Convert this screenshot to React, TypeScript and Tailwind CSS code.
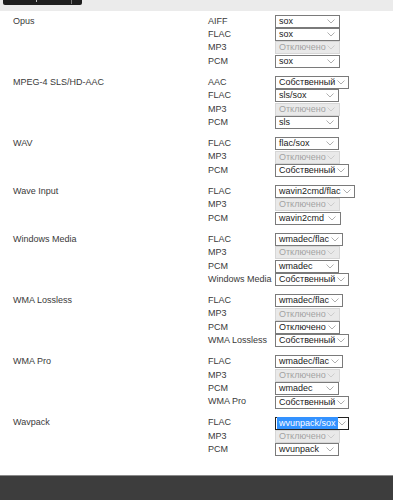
const groups = [
  {
    name: 'Opus',
    rows: [
      { label: 'AIFF', value: 'sox', w: 'w-[65px]' },
      { label: 'FLAC', value: 'sox', w: 'w-[65px]' },
      { label: 'MP3', value: 'Отключено', w: 'w-[65px]', disabled: true },
      { label: 'PCM', value: 'sox', w: 'w-[65px]' },
    ],
  },
  {
    name: 'MPEG-4 SLS/HD-AAC',
    rows: [
      { label: 'AAC', value: 'Собственный', w: 'w-[74px]' },
      { label: 'FLAC', value: 'sls/sox', w: 'w-[64px]' },
      { label: 'MP3', value: 'Отключено', w: 'w-[65px]', disabled: true },
      { label: 'PCM', value: 'sls', w: 'w-[64px]' },
    ],
  },
  {
    name: 'WAV',
    rows: [
      { label: 'FLAC', value: 'flac/sox', w: 'w-[64px]' },
      { label: 'MP3', value: 'Отключено', w: 'w-[65px]', disabled: true },
      { label: 'PCM', value: 'Собственный', w: 'w-[74px]' },
    ],
  },
  {
    name: 'Wave Input',
    rows: [
      { label: 'FLAC', value: 'wavin2cmd/flac', w: 'w-[80px]' },
      { label: 'MP3', value: 'Отключено', w: 'w-[65px]', disabled: true },
      { label: 'PCM', value: 'wavin2cmd', w: 'w-[66px]' },
    ],
  },
  {
    name: 'Windows Media',
    rows: [
      { label: 'FLAC', value: 'wmadec/flac', w: 'w-[68px]' },
      { label: 'MP3', value: 'Отключено', w: 'w-[65px]', disabled: true },
      { label: 'PCM', value: 'wmadec', w: 'w-[64px]' },
      { label: 'Windows Media', value: 'Собственный', w: 'w-[74px]' },
    ],
  },
  {
    name: 'WMA Lossless',
    rows: [
      { label: 'FLAC', value: 'wmadec/flac', w: 'w-[68px]' },
      { label: 'MP3', value: 'Отключено', w: 'w-[65px]', disabled: true },
      { label: 'PCM', value: 'Отключено', w: 'w-[65px]' },
      { label: 'WMA Lossless', value: 'Собственный', w: 'w-[74px]' },
    ],
  },
  {
    name: 'WMA Pro',
    rows: [
      { label: 'FLAC', value: 'wmadec/flac', w: 'w-[68px]' },
      { label: 'MP3', value: 'Отключено', w: 'w-[65px]', disabled: true },
      { label: 'PCM', value: 'wmadec', w: 'w-[64px]' },
      { label: 'WMA Pro', value: 'Собственный', w: 'w-[74px]' },
    ],
  },
  {
    name: 'Wavpack',
    rows: [
      { label: 'FLAC', value: 'wvunpack/sox', w: 'w-[74px]', focused: true },
      { label: 'MP3', value: 'Отключено', w: 'w-[65px]', disabled: true },
      { label: 'PCM', value: 'wvunpack', w: 'w-[64px]' },
    ],
  },
];

type Row = { label: string; value: string; w: string; disabled?: boolean; focused?: boolean };

const Chevron = ({ color }: { color: string }) => (
  <svg width="8" height="5" viewBox="0 0 8 5" className="shrink-0">
    <polyline points="0.5,0.5 4,4 7.5,0.5" fill="none" stroke={color} strokeWidth="0.8" />
  </svg>
);

const FakeSelect = ({ row }: { row: Row }) => {
  if (row.disabled) {
    return (
      <div className={`${row.w} h-[13px] flex items-center justify-between border border-[#d6d6d6] bg-[#e9e9e9] pl-[3px] pr-[4px] text-[9px] text-[#a3a3a3]`}>
        <span className="leading-none whitespace-nowrap">{row.value}</span>
        <Chevron color="#c4c4c4" />
      </div>
    );
  }
  return (
    <div
      className={`${row.w} h-[13px] flex items-center justify-between border ${row.focused ? 'border-[#222]' : 'border-[#7a7a7a]'} bg-white pl-[1px] pr-[4px] text-[9px] text-[#1a1a1a]`}
    >
      <span
        className={`leading-none whitespace-nowrap px-[2px] py-[1.5px] ${row.focused ? 'bg-[#3392ff] text-white' : ''}`}
      >
        {row.value}
      </span>
      <Chevron color="#9a9a9a" />
    </div>
  );
};

export default function App() {
  return (
    <div className="w-[393px] bg-white font-['Liberation_Sans',Arial,sans-serif] text-[9px] text-[#3a3a3a]">
      {/* top strip with cut-off button */}
      <div className="h-[11px] bg-[#ebebeb] relative">
        <div className="absolute left-[3px] top-0 w-[79px] h-[5px] bg-[#1e1e1e] rounded-b-[2px]">
          <span className="absolute left-[33px] top-0 w-[1px] h-[2px] bg-[#bbbbbb]" />
          <span className="absolute left-[68px] top-0 w-[1px] h-[4px] bg-[#777]" />
        </div>
      </div>

      <div className="pt-[3.5px] pb-[10.5px]">
        {groups.map((g) => (
          <div key={g.name} className="flex mb-[7.7px]">
            <div className="w-[208px] pl-[13px] h-[13.4px] leading-[13.4px]">{g.name}</div>
            <div className="flex flex-col">
              {g.rows.map((r) => (
                <div key={r.label} className="flex h-[13.4px] items-center">
                  <div className="w-[67px] leading-[13.4px] whitespace-nowrap">{r.label}</div>
                  <FakeSelect row={r} />
                </div>
              ))}
            </div>
          </div>
        ))}
      </div>

      <div className="h-[40px] bg-[#3d3d3d] border-t border-[#8a8a8a]" />
    </div>
  );
}
